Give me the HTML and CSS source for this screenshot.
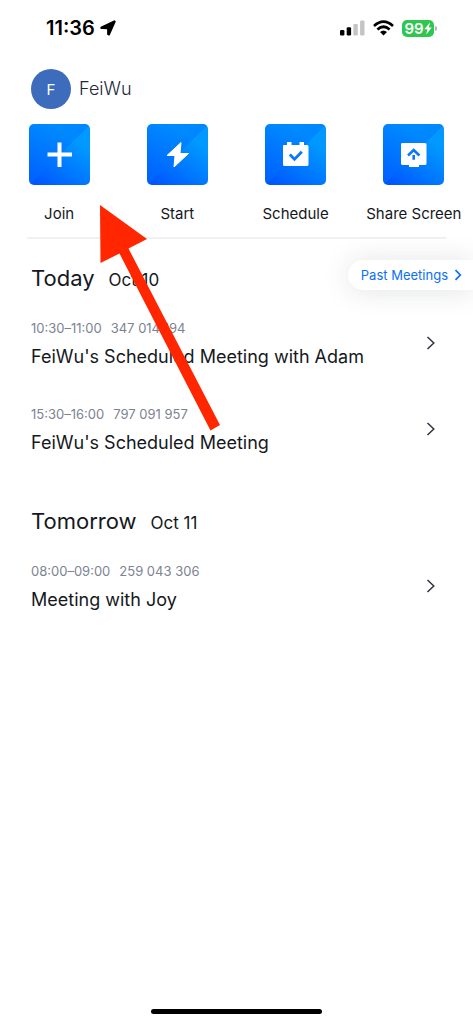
FILE: index.html
```html
<!DOCTYPE html>
<html lang="en">
<head>
<meta charset="utf-8">
<meta name="viewport" content="width=device-width, initial-scale=1">
<title>Meetings</title>
<link rel="stylesheet" href="styles.css">
</head>
<body>
<div class="screen">
  <header class="status">
    <div class="status-left">
      <span class="clock">11:36</span>
      <svg class="location" width="16" height="16" viewBox="0 0 16 16" aria-hidden="true"><path d="M1.200 7.500 14.300 1.200 14.800 1.700 9 14.600 8 14.200V8.400L1.400 8.200Z" fill="#000" stroke="#000" stroke-width="1.800" stroke-linejoin="round"/></svg>
    </div>
    <div class="status-right">
      <svg width="25" height="16" viewBox="0 0 25 16" aria-hidden="true">
        <rect x="0" y="10" width="4.400" height="5.500" rx="1.200"/><rect x="6.700" y="7.300" width="4.400" height="8.200" rx="1.200"/>
        <rect x="13.400" y="4" width="4.400" height="11.500" rx="1.200" fill="#c4c4c6"/><rect x="20.100" y="0.500" width="4.400" height="15" rx="1.200" fill="#c4c4c6"/>
      </svg>
      <svg width="21" height="16" viewBox="0 0 21 16" aria-hidden="true">
        <g fill="none" stroke="#000" stroke-width="2.700"><path d="M1 5.900Q10.500-2.500 20 5.900"/><path d="M4.400 9.400Q10.500 4.100 16.600 9.400"/></g>
        <path d="M7 12.100Q10.500 9.100 14 12.100L10.500 15.600Z"/>
      </svg>
      <span class="battery"><span class="charge">99<svg width="8" height="13" viewBox="0 0 8 13" aria-hidden="true"><path d="M6 .5.300 7.300H3.400L2.200 12.500 7.800 5.500H4.800Z" fill="#fff"/></svg></span><span class="battery-cap"></span></span>
    </div>
  </header>

  <div class="profile">
    <span class="avatar">F</span>
    <span class="name">FeiWu</span>
  </div>

  <nav class="actions">
    <button class="action" type="button">
      <span class="tile"><svg width="61" height="61" viewBox="0 0 61 61" aria-hidden="true"><path d="M30.500 18.500V43M18.500 30.500H43" stroke="#fff" stroke-width="4"/></svg></span>
      <span>Join</span>
    </button>
    <button class="action" type="button">
      <span class="tile"><svg width="61" height="61" viewBox="0 0 61 61" aria-hidden="true"><path d="M34 18.500 20 31.500H28L27 43 41.500 29.500H33Z" fill="#fff" stroke="#fff" stroke-linejoin="round"/></svg></span>
      <span>Start</span>
    </button>
    <button class="action" type="button">
      <span class="tile"><svg width="61" height="61" viewBox="0 0 61 61" aria-hidden="true"><path d="M19 21H22V18H26.500V21H34.500V18H39V21H42Q43.500 21 43.500 22.500V40.500Q43.500 42 42 42H19.500Q18 42 18 40.500V22Q18 21 19 21Z" fill="#fff"/><path d="M24.800 30.500 29.500 35.200 36.800 27.800" fill="none" stroke="#0879ff" stroke-width="2.800"/></svg></span>
      <span>Schedule</span>
    </button>
    <button class="action" type="button">
      <span class="tile"><svg width="61" height="61" viewBox="0 0 61 61" aria-hidden="true"><path d="M19 19H42Q43.500 19 43.500 20.500V39.500Q43.500 41 42 41H36V43H26V41H19.500Q18 41 18 39.500V20.500Q18 19 19 19Z" fill="#fff"/><path d="M25 31.500 30.700 26 36.400 31.500M30.700 31V35.800" fill="none" stroke="#0879ff" stroke-width="2.600"/></svg></span>
      <span>Share Screen</span>
    </button>
  </nav>

  <main class="agenda">
    <section class="day">
      <div class="day-head">
        <h2>Today</h2><span class="date">Oct 10</span>
        <a class="past" href="#past">Past Meetings <svg width="8" height="12" viewBox="0 0 8 12" aria-hidden="true"><path d="M1.500 1.200 6.300 6 1.500 10.800" fill="none" stroke="#0a70f8" stroke-width="1.700"/></svg></a>
      </div>
      <a class="meeting" href="#m1">
        <span class="details"><span class="meta"><span>10:30–11:00</span><span>347 014 194</span></span><span class="title">FeiWu's Scheduled Meeting with Adam</span></span>
        <svg width="10" height="14" viewBox="0 0 10 14" aria-hidden="true"><path d="M1.500 1 7.800 7 1.500 13" fill="none" stroke="#303440" stroke-width="1.500"/></svg>
      </a>
      <a class="meeting" href="#m2">
        <span class="details"><span class="meta"><span>15:30–16:00</span><span>797 091 957</span></span><span class="title">FeiWu's Scheduled Meeting</span></span>
        <svg width="10" height="14" viewBox="0 0 10 14" aria-hidden="true"><path d="M1.500 1 7.800 7 1.500 13" fill="none" stroke="#303440" stroke-width="1.500"/></svg>
      </a>
    </section>
    <section class="day">
      <div class="day-head"><h2>Tomorrow</h2><span class="date">Oct 11</span></div>
      <a class="meeting" href="#m3">
        <span class="details"><span class="meta"><span>08:00–09:00</span><span>259 043 306</span></span><span class="title">Meeting with Joy</span></span>
        <svg width="10" height="14" viewBox="0 0 10 14" aria-hidden="true"><path d="M1.500 1 7.800 7 1.500 13" fill="none" stroke="#303440" stroke-width="1.500"/></svg>
      </a>
    </section>
  </main>

  <div class="home-indicator"></div>
  <svg class="pointer" width="120" height="227" viewBox="0 0 120 227" aria-hidden="true"><path d="M0 0 47 34 28.500 43.500 120 220 110.500 225.500 19.500 48.500.500 58Z" fill="#ff2600"/></svg>
</div>
</body>
</html>
```

FILE: styles.css
```css
* {
  box-sizing: border-box;
}

body {
  margin: 0;
  background: #fff;
  color: #151821;
  font-family: Inter, "Liberation Sans", sans-serif;
}

a {
  color: inherit;
  text-decoration: none;
}

svg {
  display: block;
  flex: none;
}

.screen {
  position: relative;
  display: flex;
  flex-direction: column;
  min-height: 100vh;
  overflow: hidden;
}

.status {
  display: flex;
  justify-content: space-between;
  align-items: center;
  height: 56px;
  padding: 0 36px 0 46px;
  color: #000;
}

.status-left {
  display: flex;
  align-items: center;
  gap: 5px;
}

.clock {
  font-size: 20px;
  font-weight: 600;
  line-height: 24px;
}

.status-right {
  display: flex;
  align-items: center;
  gap: 8px;
}

.battery {
  display: flex;
  align-items: center;
  gap: 1px;
}

.charge {
  display: flex;
  align-items: center;
  justify-content: center;
  width: 32px;
  height: 17px;
  border-radius: 5px;
  background: #30c750;
  color: #fff;
  font-size: 15px;
  font-weight: 600;
  line-height: 17px;
}

.battery-cap {
  width: 2px;
  height: 5px;
  border-radius: 0 2px 2px 0;
  background: #b5b5b8;
}

.profile {
  display: flex;
  align-items: center;
  gap: 8px;
  padding: 13px 31px 15px;
}

.avatar {
  width: 40px;
  height: 40px;
  border-radius: 50%;
  background: #3d6cbc;
  color: #fff;
  font-size: 15px;
  line-height: 41px;
  text-align: center;
}

.name {
  color: #22273a;
  font-size: 18px;
  font-weight: 300;
  line-height: 24px;
}

.actions {
  display: grid;
  grid-template-columns: repeat(4, 1fr);
}

.action {
  display: flex;
  flex-direction: column;
  align-items: center;
  gap: 19px;
  padding: 0;
  border: 0;
  background: none;
  color: #151821;
  font: 400 15px/20px Inter, "Liberation Sans", sans-serif;
  white-space: nowrap;
}

.tile {
  border-radius: 5px;
  background:
    linear-gradient(315deg, transparent 50%, rgba(0, 112, 255, 0.45) 50%, rgba(0, 122, 255, 0.3)),
    linear-gradient(35deg, #0050ff, #0078ff 40%, #0099ff 75%);
}

.agenda {
  margin: 13px 27px 0;
  border-top: 2px solid #f0f1f4;
}

.day {
  padding-top: 21px;
}

.day + .day {
  padding-top: 31px;
}

.day-head {
  display: flex;
  align-items: baseline;
  gap: 14px;
  margin: 0 -27px 4px 0;
  padding-left: 4px;
}

h2 {
  margin: 0;
  font-size: 22px;
  font-weight: 400;
  line-height: 36px;
}

.date {
  font-size: 17px;
  line-height: 24px;
}

.past {
  display: flex;
  align-items: center;
  align-self: center;
  gap: 6px;
  height: 30px;
  margin: -6px 0 0 auto;
  padding: 0 11px 0 13px;
  border-radius: 15px 0 0 15px;
  background: #fff;
  box-shadow: 0 1px 28px rgba(30, 40, 50, 0.13);
  color: #0a70f8;
  font-size: 13px;
  line-height: 20px;
}

.meeting {
  display: flex;
  align-items: center;
  justify-content: space-between;
  height: 86px;
  padding: 0 10px 0 4px;
}

.details {
  display: flex;
  flex-direction: column;
  gap: 7px;
}

.meta {
  display: flex;
  gap: 9px;
  color: #7d8393;
  font-size: 13px;
  font-weight: 400;
  line-height: 20px;
}

.title {
  font-size: 18px;
  line-height: 24px;
}

.home-indicator {
  width: 36%;
  height: 5px;
  margin: auto auto 9px;
  border-radius: 3px;
  background: #000;
}

.pointer {
  position: absolute;
  top: 205px;
  left: 100px;
  pointer-events: none;
}
```
